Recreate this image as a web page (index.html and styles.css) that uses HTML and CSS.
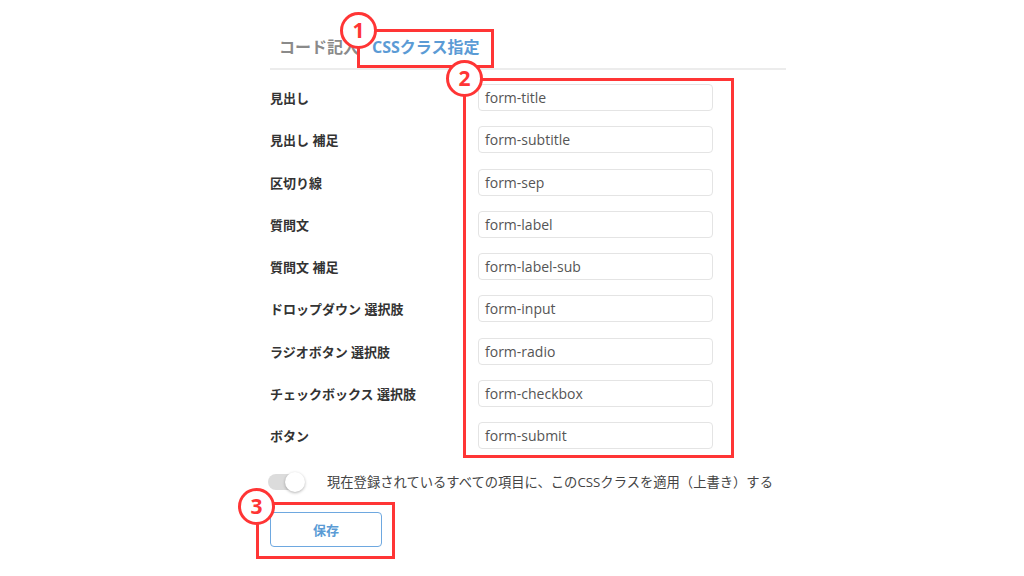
FILE: index.html
```html
<!DOCTYPE html>
<html lang="ja">
<head>
<meta charset="utf-8">
<title>CSSクラス指定</title>
<link rel="stylesheet" href="styles.css">
</head>
<body>
<div class="page">
  <div class="panel">
    <div class="tabs">
      <div class="tab">コード記入</div>
      <div class="tab active">CSSクラス指定</div>
    </div>
    <div class="fields">
      <div class="label">見出し</div><div class="input">form-title</div>
      <div class="label">見出し 補足</div><div class="input">form-subtitle</div>
      <div class="label">区切り線</div><div class="input">form-sep</div>
      <div class="label">質問文</div><div class="input">form-label</div>
      <div class="label">質問文 補足</div><div class="input">form-label-sub</div>
      <div class="label">ドロップダウン 選択肢</div><div class="input">form-input</div>
      <div class="label">ラジオボタン 選択肢</div><div class="input">form-radio</div>
      <div class="label">チェックボックス 選択肢</div><div class="input">form-checkbox</div>
      <div class="label">ボタン</div><div class="input">form-submit</div>
    </div>
    <div class="toggle-row">
      <span class="toggle"><span class="knob"></span></span>
      <span class="toggle-text">現在登録されているすべての項目に、このCSSクラスを適用（上書き）する</span>
    </div>
    <button class="save">保存</button>
  </div>

  <div class="mark-box box1"></div>
  <div class="mark-num num1">1</div>
  <div class="mark-box box2"></div>
  <div class="mark-num num2">2</div>
  <div class="mark-box box3"></div>
  <div class="mark-num num3">3</div>
</div>
</body>
</html>
```
FILE: styles.css
```css
html, body {
  margin: 0;
  padding: 0;
  background: #ffffff;
}

body {
  font-family: "Open Sans", "Noto Sans CJK JP", sans-serif;
  color: #333333;
}

.page {
  position: relative;
  width: 1024px;
  height: 576px;
  overflow: hidden;
}

.panel {
  margin-left: 270px;
  width: 516px;
  padding-top: 27px;
}

.tabs {
  display: flex;
  gap: 1px;
  padding-left: 3px;
  border-bottom: 2px solid #ececec;
}

.tab {
  padding: 10px 6px 11px;
  line-height: 20px;
  font-size: 16px;
  font-weight: 700;
  color: #8a8a8a;
}

.tab.active {
  color: #5b9bd5;
}

.fields {
  display: grid;
  grid-template-columns: 208px 235px;
  row-gap: 15.25px;
  margin-top: 14px;
}

.label {
  align-self: center;
  font-size: 13px;
  font-weight: 700;
  color: #333333;
  white-space: nowrap;
}

.input {
  box-sizing: border-box;
  height: 27px;
  border: 1px solid #e4e4e4;
  border-radius: 4px;
  padding: 0 6px;
  font-size: 14px;
  line-height: 25px;
  color: #555555;
}

.toggle-row {
  display: flex;
  align-items: center;
  margin-top: 24px;
  height: 18px;
}

.toggle {
  position: relative;
  display: block;
  width: 36px;
  height: 16px;
  margin-left: -2px;
  border-radius: 8px;
  background: #dcdcdc;
}

.knob {
  position: absolute;
  right: -1px;
  top: -2px;
  width: 20px;
  height: 20px;
  border-radius: 50%;
  background: #ffffff;
  box-shadow: 0 1px 3px rgba(0, 0, 0, 0.3);
}

.toggle-text {
  margin-left: 23px;
  font-size: 13.3px;
  line-height: 16px;
  padding-bottom: 1px;
  color: #444444;
  white-space: nowrap;
}

.save {
  display: block;
  margin-top: 21px;
  width: 112px;
  height: 35px;
  border: 1.5px solid #6ea8e0;
  border-radius: 4px;
  background: #ffffff;
  font-family: "Open Sans", "Noto Sans CJK JP", sans-serif;
  font-size: 13px;
  font-weight: 700;
  line-height: 30px;
  color: #5b9bd5;
}

.mark-box {
  position: absolute;
  box-sizing: border-box;
  border: 3px solid #ff3535;
}

.box1 { left: 357px; top: 29px; width: 137px; height: 39px; }
.box2 { left: 463px; top: 78px; width: 271px; height: 380px; }
.box3 { left: 256px; top: 502px; width: 139px; height: 57px; }

.mark-num {
  position: absolute;
  box-sizing: border-box;
  width: 37px;
  height: 37px;
  border: 3px solid #ff3535;
  border-radius: 50%;
  background: #ffffff;
  color: #ff3535;
  font-family: "Open Sans", sans-serif;
  font-weight: 700;
  font-size: 21px;
  line-height: 31px;
  text-align: center;
}

.num1 { left: 340px; top: 12px; }
.num2 { left: 446px; top: 60px; }
.num3 { left: 238px; top: 488px; }
```
